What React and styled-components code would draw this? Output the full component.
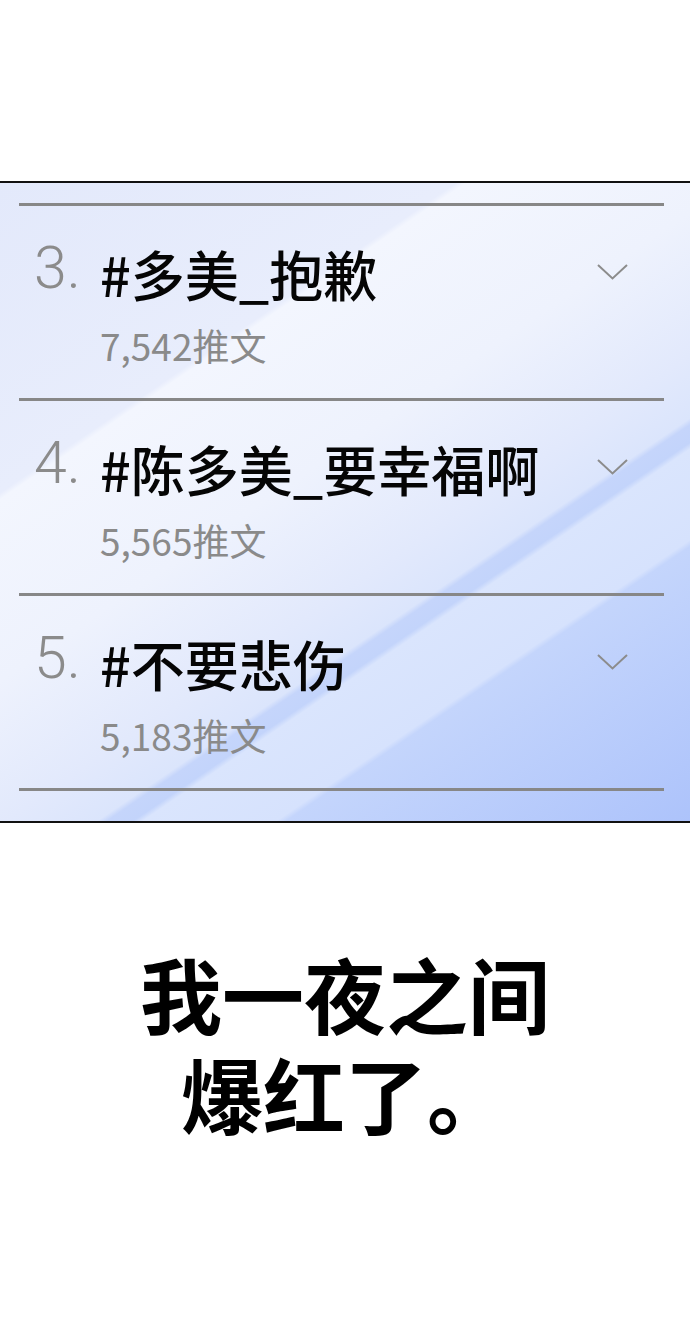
import styled, { createGlobalStyle } from 'styled-components';

const GlobalStyle = createGlobalStyle`
  html, body {
    margin: 0;
    padding: 0;
    background: #ffffff;
  }

  body {
    font-family: "Noto Sans CJK SC", "Noto Sans", sans-serif;
  }
`;

const Page = styled.div`
  width: 690px;
  height: 1321px;
  padding-top: 181px;
  box-sizing: border-box;
  overflow: hidden;
`;

const TrendPanel = styled.section`
  border-top: 2px solid #111;
  border-bottom: 2px solid #111;
  padding: 20px 26px 30px 19px;
  background: linear-gradient(
    145.8deg,
    #e3e9fb 0%,
    #e8edfc 28%,
    #f3f6fe 28.6%,
    #eef2fd 45%,
    #e2e9fc 58%,
    #dbe5fc 63.6%,
    #c5d5fb 64.2%,
    #c3d4fb 65.8%,
    #dae5fd 66.4%,
    #d6e2fd 74.6%,
    #c4d5fc 75.2%,
    #adc3fb 100%
  );
`;

const Divider = styled.div`
  height: 3px;
  background: #878787;
`;

const TrendRow = styled.div`
  display: grid;
  grid-template-columns: 66px 1fr 31px;
  height: 192px;
  padding: 0 36px 0 15px;
  box-sizing: border-box;
`;

const Rank = styled.div`
  padding-top: 33px;
  font-family: Roboto, "Noto Sans", sans-serif;
  font-weight: 300;
  font-size: 59px;
  line-height: 57px;
  color: #8b8b8b;
`;

const Info = styled.div`
  padding-top: 41px;
  display: flex;
  flex-direction: column;
  gap: 26px;
`;

const Tag = styled.div`
  font-family: "Noto Sans CJK SC", "Noto Sans", sans-serif;
  font-weight: 500;
  font-size: 54px;
  line-height: 54px;
  color: #050505;
  white-space: nowrap;
`;

const Count = styled.div`
  font-family: "Noto Sans CJK SC", "Noto Sans", sans-serif;
  font-weight: 400;
  font-size: 37px;
  line-height: 37px;
  color: #8a8a8a;
`;

const Chevron = styled.svg`
  margin-top: 58px;
  display: block;
`;

const Caption = styled.p`
  margin: 120px 0 0;
  text-align: center;
  font-family: "Noto Sans CJK SC", sans-serif;
  font-weight: 700;
  font-size: 82px;
  line-height: 100px;
  color: #000;
`;

const trends = [
  { rank: '3.', tag: '#多美_抱歉', count: '7,542推文' },
  { rank: '4.', tag: '#陈多美_要幸福啊', count: '5,565推文' },
  { rank: '5.', tag: '#不要悲伤', count: '5,183推文' },
];

export default function App() {
  return (
    <Page>
      <GlobalStyle />
      <TrendPanel>
        <Divider />
        {trends.map((t) => (
          <div key={t.rank}>
            <TrendRow>
              <Rank>{t.rank}</Rank>
              <Info>
                <Tag>{t.tag}</Tag>
                <Count>{t.count}</Count>
              </Info>
              <Chevron width="31" height="16" viewBox="0 0 31 16">
                <polyline
                  points="1,1 15.5,14.5 30,1"
                  fill="none"
                  stroke="#8c8c8c"
                  strokeWidth="2"
                />
              </Chevron>
            </TrendRow>
            <Divider />
          </div>
        ))}
      </TrendPanel>
      <Caption>
        我一夜之间
        <br />
        爆红了。
      </Caption>
    </Page>
  );
}
